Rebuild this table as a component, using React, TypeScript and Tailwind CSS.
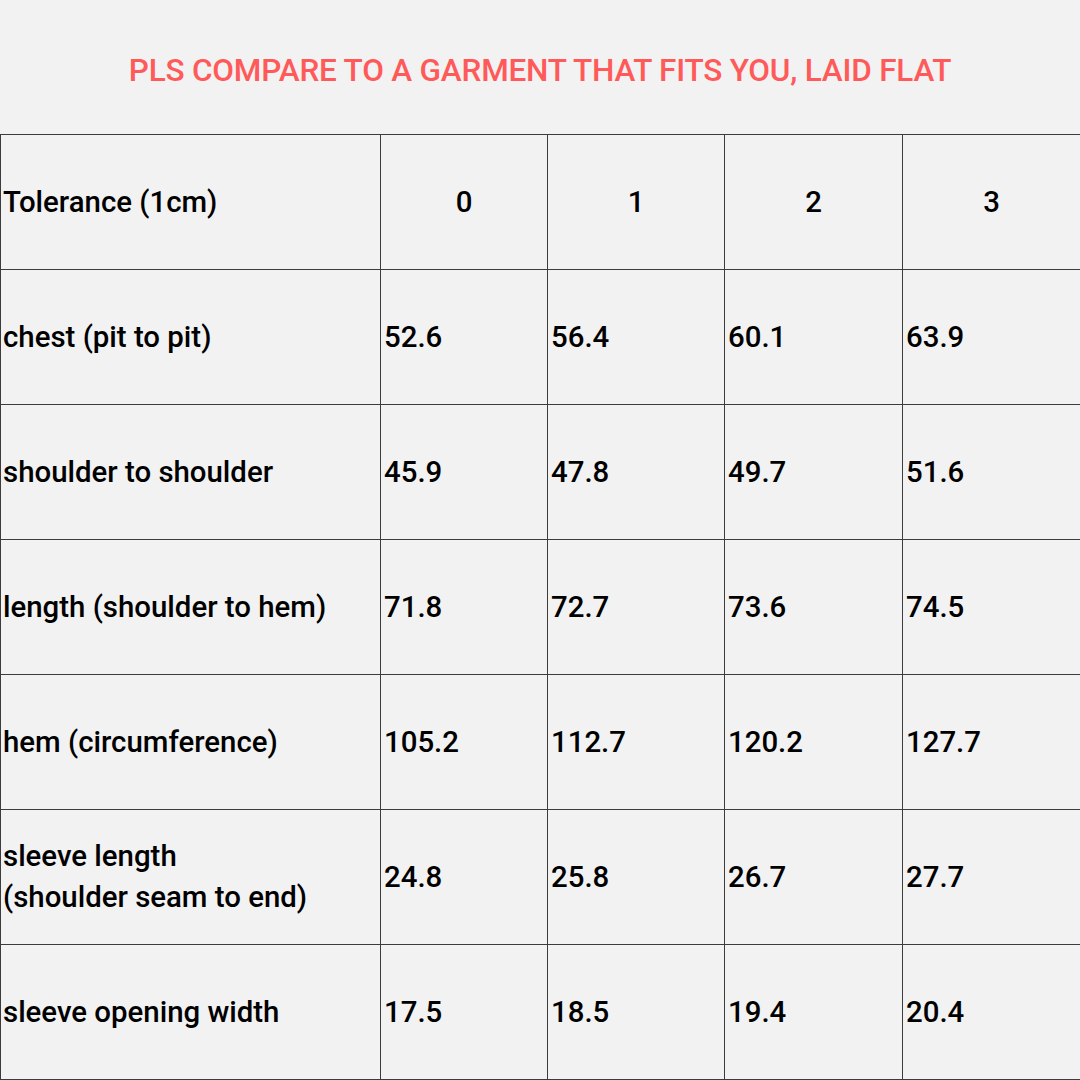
const cols = ['0', '1', '2', '3'];

const rows: { label: string[]; values: string[] }[] = [
  { label: ['chest (pit to pit)'], values: ['52.6', '56.4', '60.1', '63.9'] },
  { label: ['shoulder to shoulder'], values: ['45.9', '47.8', '49.7', '51.6'] },
  { label: ['length (shoulder to hem)'], values: ['71.8', '72.7', '73.6', '74.5'] },
  { label: ['hem (circumference)'], values: ['105.2', '112.7', '120.2', '127.7'] },
  { label: ['sleeve length', '(shoulder seam to end)'], values: ['24.8', '25.8', '26.7', '27.7'] },
  { label: ['sleeve opening width'], values: ['17.5', '18.5', '19.4', '20.4'] },
];

const cell = 'border-r border-b border-[#3c3c3c] flex items-center h-[135px]';

export default function App() {
  return (
    <div className="w-[1080px] h-[1080px] bg-[#f2f2f2] text-black overflow-hidden" style={{ fontFamily: 'Roboto, "Liberation Sans", sans-serif' }}>
      <div className="h-[134px] flex items-center justify-center pt-[8px]">
        <h1 className="text-[31.5px] font-medium tracking-[-0.2px] text-[#ff5a5a]">PLS COMPARE TO A GARMENT THAT FITS YOU, LAID FLAT</h1>
      </div>
      <div className="grid grid-cols-[380px_167px_177px_178px_178px] border-t border-l border-[#3c3c3c] text-[29.4px] font-medium">
        <div className={`${cell} pl-[2px]`}>Tolerance (1cm)</div>
        {cols.map((c) => (
          <div key={c} className={`${cell} justify-center`}>{c}</div>
        ))}
        {rows.map((r) => (
          <>
            <div key={r.label[0]} className={`${cell} pl-[2px]`}>
              <div className="leading-[41px]">
                {r.label.map((l) => (
                  <div key={l}>{l}</div>
                ))}
              </div>
            </div>
            {r.values.map((v, i) => (
              <div key={r.label[0] + i} className={`${cell} pl-[3px]`}>{v}</div>
            ))}
          </>
        ))}
      </div>
    </div>
  );
}
